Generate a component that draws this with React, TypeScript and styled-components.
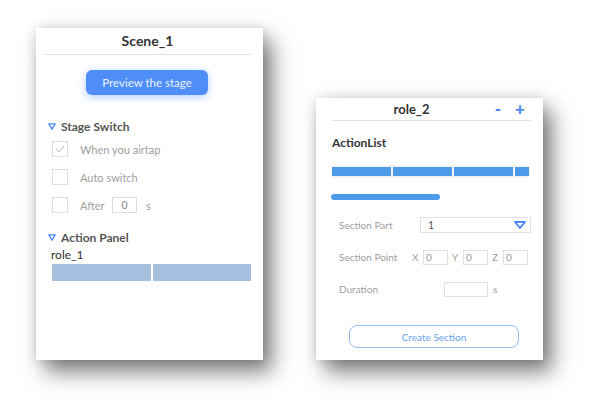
import React from "react";
import styled, { createGlobalStyle } from "styled-components";

const GlobalStyle = createGlobalStyle`
  html, body { margin: 0; padding: 0; background: #ffffff; }
  body { font-family: Lato, "Noto Sans", sans-serif; }
  * { box-sizing: border-box; }
`;

const Page = styled.div`
  display: flex;
  align-items: flex-end;
  gap: 53px;
  padding: 28px 0 48px 36px;
  height: 408px;
`;

const Panel = styled.div<{ $h: number }>`
  width: 227px;
  height: ${(p) => p.$h}px;
  background: #ffffff;
  display: flex;
  flex-direction: column;
  box-shadow: 9px 12px 20px rgba(0, 0, 0, 0.5), 0 0 12px rgba(0, 0, 0, 0.14);
`;

const TitleBar = styled.div<{ $ml: number; $mr: number; $h: number }>`
  display: flex;
  align-items: center;
  height: ${(p) => p.$h}px;
  margin: 0 ${(p) => p.$mr}px 0 ${(p) => p.$ml}px;
  border-bottom: 1.5px solid #e2e2e2;
  flex-shrink: 0;
`;

const Title = styled.div<{ $size: number }>`
  flex: 1;
  text-align: center;
  font-weight: 700;
  font-size: ${(p) => p.$size}px;
  color: #333;
  line-height: 16px;
`;

const Controls = styled.div`
  display: flex;
  gap: 8px;
  margin-right: 4px;
`;

const ControlBtn = styled.span`
  width: 14px;
  text-align: center;
  color: #4a88f2;
  font-weight: 900;
  font-size: 17px;
  line-height: 16px;
  cursor: pointer;
`;

const PreviewButton = styled.button`
  margin: 15px 0 0 50px;
  width: 122px;
  height: 25px;
  border: none;
  border-radius: 6px;
  background: #4f8df8;
  color: #eaf1ff;
  font-family: Lato, "Noto Sans", sans-serif;
  font-size: 11.5px;
  box-shadow: 0 2px 8px rgba(79, 141, 248, 0.45);
  padding: 0;
`;

const SectionHeader = styled.div<{ $mt: number }>`
  display: flex;
  align-items: center;
  margin-top: ${(p) => p.$mt}px;
  padding-left: 12px;
  height: 16px;
  font-weight: 700;
  font-size: 12px;
  color: #555;
  gap: 5px;
`;

const CheckRow = styled.div`
  display: flex;
  align-items: center;
  height: 28px;
  padding-left: 16px;
  font-size: 11px;
  color: #a0a0a0;
`;

const Box = styled.div`
  width: 16px;
  height: 16px;
  border: 1px solid #dedede;
  display: flex;
  align-items: center;
  justify-content: center;
  margin-right: 12px;
`;

const SmallText = styled.span<{ $w?: number; $ml?: number }>`
  ${(p) => (p.$w ? `width: ${p.$w}px;` : "")}
  ${(p) => (p.$ml ? `margin-left: ${p.$ml}px;` : "")}
`;

const NumBox = styled.div`
  width: 25px;
  height: 16px;
  border: 1px solid #dcdcdc;
  font-size: 10.5px;
  color: #888;
  display: flex;
  align-items: center;
  justify-content: center;
`;

const RoleName = styled.div`
  margin: 2px 0 0 15px;
  font-size: 12px;
  line-height: 16px;
  color: #333;
`;

const RoleBar = styled.div`
  display: flex;
  gap: 2px;
  margin: 1px 0 0 16px;
  width: 199px;
  height: 17px;
`;

const RoleSeg = styled.div`
  flex: 1;
  background: #a4c0de;
`;

const ListLabel = styled.div`
  margin: 14px 0 0 16px;
  font-weight: 700;
  font-size: 12px;
  line-height: 16px;
  color: #333;
`;

const Track = styled.div`
  display: flex;
  gap: 2px;
  margin: 14px 0 0 15px;
  width: 199px;
  height: 13px;
  padding: 2px 1px;
  background: #f3f4f6;
  border-radius: 3px;
  overflow: hidden;
`;

const TrackSeg = styled.div<{ $grow?: boolean }>`
  ${(p) => (p.$grow ? "flex: 1;" : "width: 59px; flex-shrink: 0;")}
  background: #4d9ae8;
`;

const Pill = styled.div`
  margin: 16px 0 0 15px;
  width: 109px;
  height: 6px;
  border-radius: 3px;
  background: #4d9ae8;
`;

const Form = styled.div`
  display: flex;
  flex-direction: column;
  gap: 16px;
  margin-top: 17px;
  padding-left: 23px;
`;

const FormRow = styled.div`
  display: flex;
  align-items: center;
  height: 16px;
  font-size: 10px;
  color: #a0a0a0;
`;

const FormLabel = styled.div<{ $w: number }>`
  width: ${(p) => p.$w}px;
  flex-shrink: 0;
`;

const Select = styled.div`
  width: 111px;
  height: 16px;
  border: 1px solid #e0e0e0;
  display: flex;
  align-items: center;
  justify-content: space-between;
  padding: 0 4px 0 7px;
  color: #555;
  font-size: 10.5px;
`;

const Axis = styled.span<{ $ml: number }>`
  width: 11px;
  margin-left: ${(p) => p.$ml}px;
  flex-shrink: 0;
`;

const Field = styled.div<{ $w: number }>`
  width: ${(p) => p.$w}px;
  height: 15px;
  border: 1px solid #e0e0e0;
  padding-left: 2px;
  font-size: 10px;
  color: #999;
  display: flex;
  align-items: center;
`;

const CreateButton = styled.button`
  margin: 28px 0 0 33px;
  width: 170px;
  height: 23px;
  border: 1px solid #98bdf0;
  border-radius: 8px;
  background: #fff;
  color: #6aa2ee;
  font-family: Lato, "Noto Sans", sans-serif;
  font-size: 10px;
  padding: 0;
`;

const Tri = () => (
  <svg width="8" height="7" viewBox="0 0 8 7">
    <path d="M0.8 0.8 H7.2 L4 6.2 Z" fill="none" stroke="#4a88f2" strokeWidth="1.3" strokeLinejoin="round" />
  </svg>
);

const Check = () => (
  <svg width="10" height="8" viewBox="0 0 10 8">
    <path d="M1 4 L4 7 L9 1" fill="none" stroke="#bdbdbd" strokeWidth="1" />
  </svg>
);

const Caret = () => (
  <svg width="12" height="8" viewBox="0 0 12 8">
    <path d="M1 1 H11 L6 7 Z" fill="none" stroke="#4a88f2" strokeWidth="1.8" strokeLinejoin="round" />
  </svg>
);

export default function App() {
  return (
    <>
      <GlobalStyle />
      <Page>
        <Panel $h={332}>
          <TitleBar $ml={8} $mr={12} $h={27}>
            <Title $size={14}>Scene_1</Title>
          </TitleBar>
          <PreviewButton>Preview the stage</PreviewButton>
          <SectionHeader $mt={23}>
            <Tri />
            Stage Switch
          </SectionHeader>
          <CheckRow style={{ marginTop: 1 }}>
            <Box>
              <Check />
            </Box>
            When you airtap
          </CheckRow>
          <CheckRow>
            <Box />
            Auto switch
          </CheckRow>
          <CheckRow>
            <Box />
            <SmallText $w={32}>After</SmallText>
            <NumBox>0</NumBox>
            <SmallText $ml={9}>s</SmallText>
          </CheckRow>
          <SectionHeader $mt={10}>
            <Tri />
            Action Panel
          </SectionHeader>
          <RoleName>role_1</RoleName>
          <RoleBar>
            <RoleSeg />
            <RoleSeg />
          </RoleBar>
        </Panel>
        <Panel $h={262}>
          <TitleBar $ml={16} $mr={12} $h={23}>
            <Title $size={13}>role_2</Title>
            <Controls>
              <ControlBtn>-</ControlBtn>
              <ControlBtn>+</ControlBtn>
            </Controls>
          </TitleBar>
          <ListLabel>ActionList</ListLabel>
          <Track>
            <TrackSeg />
            <TrackSeg />
            <TrackSeg />
            <TrackSeg $grow />
          </Track>
          <Pill />
          <Form>
            <FormRow>
              <FormLabel $w={81}>Section Part</FormLabel>
              <Select>
                1
                <Caret />
              </Select>
            </FormRow>
            <FormRow>
              <FormLabel $w={73}>Section Point</FormLabel>
              <Axis $ml={0}>X</Axis>
              <Field $w={25}>0</Field>
              <Axis $ml={4}>Y</Axis>
              <Field $w={25}>0</Field>
              <Axis $ml={4}>Z</Axis>
              <Field $w={25}>0</Field>
            </FormRow>
            <FormRow>
              <FormLabel $w={105}>Duration</FormLabel>
              <Field $w={44} />
              <SmallText $ml={5}>s</SmallText>
            </FormRow>
          </Form>
          <CreateButton>Create Section</CreateButton>
        </Panel>
      </Page>
    </>
  );
}
